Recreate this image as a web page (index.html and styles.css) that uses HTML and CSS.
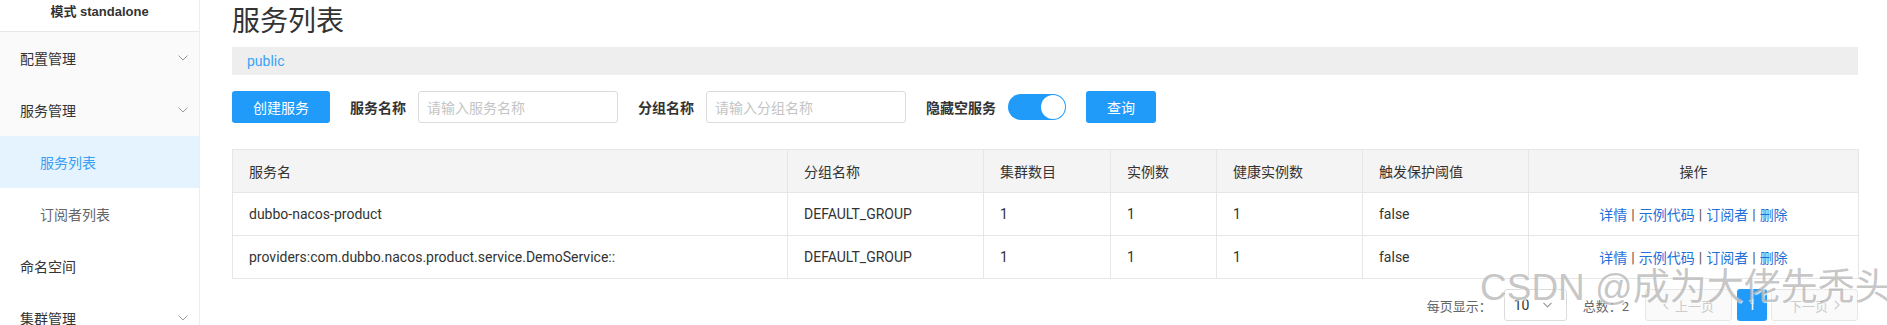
FILE: index.html
```html
<!DOCTYPE html>
<html lang="zh-CN">
<head>
<meta charset="utf-8">
<title>服务列表</title>
<link rel="stylesheet" href="styles.css">
</head>
<body>
<div class="app">
  <aside class="sidebar">
    <div class="sidebar-head">模式 standalone</div>
    <ul class="menu">
      <li class="menu-item parent">
        <span>配置管理</span>
        <svg class="chev" width="10" height="6" viewBox="0 0 10 6"><path d="M0.5 0.5 L5 5 L9.5 0.5" fill="none" stroke="#999" stroke-width="1"/></svg>
      </li>
      <li class="menu-item parent">
        <span>服务管理</span>
        <svg class="chev" width="10" height="6" viewBox="0 0 10 6"><path d="M0.5 0.5 L5 5 L9.5 0.5" fill="none" stroke="#999" stroke-width="1"/></svg>
      </li>
      <li class="menu-item sub active"><span>服务列表</span></li>
      <li class="menu-item sub"><span>订阅者列表</span></li>
      <li class="menu-item"><span>命名空间</span></li>
      <li class="menu-item">
        <span>集群管理</span>
        <svg class="chev" width="10" height="6" viewBox="0 0 10 6"><path d="M0.5 0.5 L5 5 L9.5 0.5" fill="none" stroke="#999" stroke-width="1"/></svg>
      </li>
    </ul>
  </aside>

  <main class="main">
    <h1 class="page-title">服务列表</h1>
    <div class="ns-bar"><span class="ns">public</span></div>

    <div class="toolbar">
      <button class="btn btn-primary btn-create">创建服务</button>
      <label class="field-label">服务名称</label>
      <div class="input"><span class="placeholder">请输入服务名称</span></div>
      <label class="field-label">分组名称</label>
      <div class="input"><span class="placeholder">请输入分组名称</span></div>
      <label class="field-label">隐藏空服务</label>
      <div class="switch"><span class="knob"></span></div>
      <button class="btn btn-primary btn-query">查询</button>
    </div>

    <table class="grid">
      <colgroup>
        <col class="c-name"><col class="c-group"><col class="c-cluster"><col class="c-inst"><col class="c-healthy"><col class="c-threshold"><col class="c-ops">
      </colgroup>
      <thead>
        <tr>
          <th>服务名</th><th>分组名称</th><th>集群数目</th><th>实例数</th><th>健康实例数</th><th>触发保护阈值</th><th class="center">操作</th>
        </tr>
      </thead>
      <tbody>
        <tr>
          <td>dubbo-nacos-product</td><td>DEFAULT_GROUP</td><td>1</td><td>1</td><td>1</td><td>false</td>
          <td class="center ops"><a>详情</a><span class="sep">|</span><a>示例代码</a><span class="sep">|</span><a>订阅者</a><span class="sep">|</span><a>删除</a></td>
        </tr>
        <tr>
          <td>providers:com.dubbo.nacos.product.service.DemoService::</td><td>DEFAULT_GROUP</td><td>1</td><td>1</td><td>1</td><td>false</td>
          <td class="center ops"><a>详情</a><span class="sep">|</span><a>示例代码</a><span class="sep">|</span><a>订阅者</a><span class="sep">|</span><a>删除</a></td>
        </tr>
      </tbody>
    </table>

    <div class="pager">
      <span class="pager-label">每页显示：</span>
      <div class="select"><span>10</span>
        <svg width="9" height="6" viewBox="0 0 9 6"><path d="M0.5 0.8 L4.5 4.8 L8.5 0.8" fill="none" stroke="#999" stroke-width="1.2"/></svg>
      </div>
      <span class="pager-total">总数：2</span>
      <button class="pg pg-nav"><svg width="6" height="10" viewBox="0 0 6 10"><path d="M5 0.8 L1 5 L5 9.2" fill="none" stroke="#ccc" stroke-width="1.2"/></svg><span>上一页</span></button>
      <button class="pg pg-cur">1</button>
      <button class="pg pg-nav"><span>下一页</span><svg width="6" height="10" viewBox="0 0 6 10"><path d="M1 0.8 L5 5 L1 9.2" fill="none" stroke="#ccc" stroke-width="1.2"/></svg></button>
    </div>
  </main>
  <div class="watermark">CSDN @成为大佬先秃头</div>
</div>
</body>
</html>
```

FILE: styles.css
```css
* { box-sizing: border-box; }
html, body { margin: 0; padding: 0; }
body {
  font-family: Roboto, "Noto Sans CJK SC", sans-serif;
  font-size: 14px;
  color: #333;
  background: #fff;
  overflow: hidden;
  height: 325px;
}
.app {
  display: flex;
  position: relative;
  height: 325px;
  overflow: hidden;
}

/* sidebar */
.sidebar {
  width: 200px;
  flex: none;
  border-right: 1px solid #eee;
  background: #fff;
}
.sidebar-head {
  height: 32px;
  border-bottom: 1px solid #e8e8e8;
  text-align: center;
  font-family: "Liberation Sans", "Noto Sans CJK SC", sans-serif;
  font-weight: bold;
  font-size: 13px;
  line-height: 24px;
  color: #333;
}
.menu { list-style: none; margin: 0; padding: 0; }
.menu-item {
  height: 52px;
  display: flex;
  align-items: center;
  justify-content: space-between;
  padding: 0 11px 0 20px;
  color: #333;
  font-size: 14px;
}
.menu-item.parent { background: #fafafa; }
.menu-item.sub { padding-left: 40px; color: #666; }
.menu-item.active { background: #e4f3fe; color: #3a9ef2; }
.chev { flex: none; }

/* main */
.main {
  flex: 1;
  min-width: 0;
  padding: 2px 29px 0 32px;
}
.page-title {
  margin: 0;
  font-size: 28px;
  font-weight: normal;
  line-height: 40px;
  height: 40px;
  color: #333;
}
.ns-bar {
  margin-top: 5px;
  height: 28px;
  background: #eee;
  padding-left: 15px;
  display: flex;
  align-items: center;
}
.ns { color: #3aa3f5; font-size: 14px; }

.toolbar {
  display: flex;
  align-items: center;
  height: 32px;
  margin-top: 16px;
}
.btn {
  height: 32px;
  border: none;
  border-radius: 3px;
  font-family: inherit;
  font-size: 14px;
  padding: 0;
}
.btn-primary { background: #209bfa; color: #fff; }
.btn-create { width: 98px; }
.btn-query { width: 70px; margin-left: 20px; }
.field-label {
  margin-left: 20px;
  margin-right: 12px;
  font-weight: bold;
  color: #333;
  white-space: nowrap;
}
.input {
  width: 200px;
  height: 32px;
  border: 1px solid #dcdcdc;
  border-radius: 3px;
  padding-left: 8px;
  display: flex;
  align-items: center;
}
.placeholder { color: #c4c4c4; }
.switch {
  width: 58px;
  height: 26px;
  border-radius: 13px;
  background: #209bfa;
  display: flex;
  justify-content: flex-end;
  align-items: center;
  padding-right: 1px;
}
.knob {
  width: 24px;
  height: 24px;
  border-radius: 50%;
  background: #fff;
}

/* table */
.grid {
  margin-top: 26px;
  width: 1626px;
  border-collapse: collapse;
  table-layout: fixed;
  border: 1px solid #e6e6e6;
}
.c-name { width: 555px; }
.c-group { width: 196px; }
.c-cluster { width: 127px; }
.c-inst { width: 106px; }
.c-healthy { width: 146px; }
.c-threshold { width: 166px; }
.c-ops { width: 330px; }
.grid th, .grid td {
  height: 43px;
  border: 1px solid #e6e6e6;
  padding: 0 16px;
  text-align: left;
  font-weight: normal;
  white-space: nowrap;
  overflow: hidden;
}
.grid th { background: #f4f4f4; color: #333; }
.grid td { color: #333; }
.grid .center { text-align: center; }
.ops a { color: #1f6fd8; }
.ops .sep { color: #555; margin: 0 4px; }

/* pager */
.pager {
  display: flex;
  justify-content: flex-end;
  align-items: center;
  margin-top: 10px;
  height: 32px;
  font-size: 13px;
  color: #666;
}
.pager-label { margin-right: 12px; }
.select {
  width: 63px;
  height: 32px;
  border: 1px solid #dcdcdc;
  border-radius: 3px;
  display: flex;
  align-items: center;
  justify-content: space-between;
  padding: 0 14px 0 9px;
  color: #333;
  font-size: 14px;
}
.pager-total { margin-left: 16px; margin-right: 16px; }
.pg {
  height: 32px;
  border-radius: 3px;
  font-family: inherit;
  font-size: 13px;
  padding: 0;
  display: flex;
  align-items: center;
  justify-content: center;
  gap: 6px;
}
.pg-nav {
  width: 87px;
  border: 1px solid #e6e6e6;
  background: #fafafa;
  color: #ccc;
}
.pg-cur {
  width: 30px;
  margin: 0 4px 0 5px;
  border: none;
  background: #209bfa;
  color: #fff;
  font-size: 14px;
}

.watermark {
  position: absolute;
  left: 1480px;
  top: 266px;
  font-family: "Liberation Sans", "Noto Sans CJK SC", sans-serif;
  font-size: 37px;
  line-height: 44px;
  color: rgba(150, 150, 150, 0.55);
  text-shadow: 1px 1px 1px rgba(255, 255, 255, 0.8);
  white-space: nowrap;
  pointer-events: none;
}
```
